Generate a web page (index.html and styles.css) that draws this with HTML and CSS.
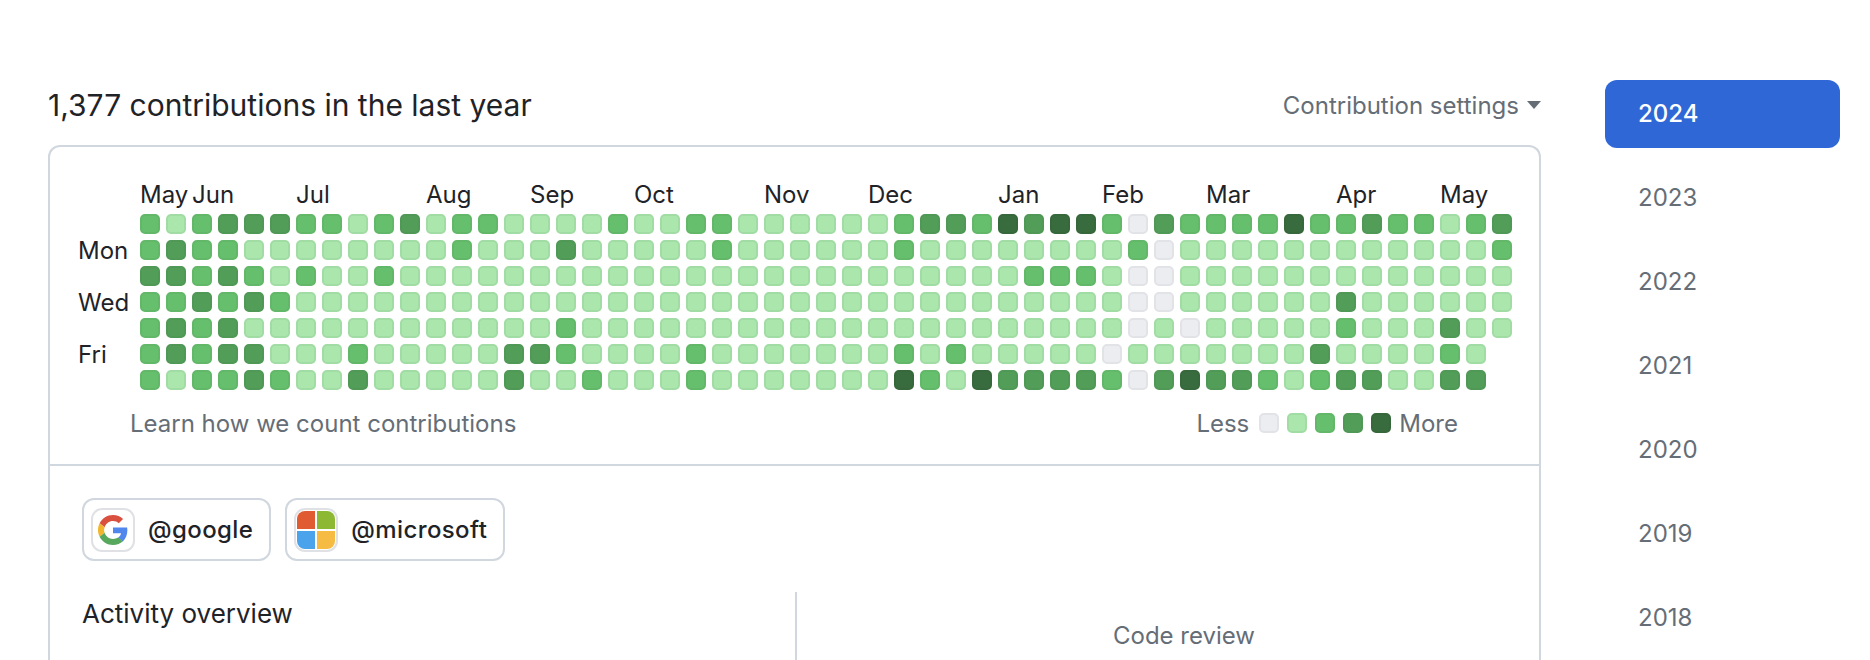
FILE: index.html
```html
<!DOCTYPE html>
<html lang="en">
<head>
    <meta charset="UTF-8">
    <title>Contributions</title>
    <link rel="stylesheet" href="styles.css">
</head>
<body>

<div class="page">
    <div class="main">
        <div class="head">
            <h2 class="total">1,377 contributions in the last year</h2>
            <div class="settings">Contribution settings<span class="caret"></span></div>
        </div>

        <div class="card">
            <div class="calendar">
                <div class="months">
                    <span class="w2">May</span>
                    <span class="w4">Jun</span>
                    <span class="w5">Jul</span>
                    <span class="w4">Aug</span>
                    <span class="w4">Sep</span>
                    <span class="w5">Oct</span>
                    <span class="w4">Nov</span>
                    <span class="w5">Dec</span>
                    <span class="w4">Jan</span>
                    <span class="w4">Feb</span>
                    <span class="w5">Mar</span>
                    <span class="w4">Apr</span>
                    <span class="w2">May</span>
                </div>
                <div class="weeks">
                    <div class="days">
                        <span></span>
                        <span>Mon</span>
                        <span></span>
                        <span>Wed</span>
                        <span></span>
                        <span>Fri</span>
                        <span></span>
                    </div>
                    <div id="grid" class="grid"></div>
                </div>
                <div class="foot">
                    <span>Learn how we count contributions</span>
                    <div class="legend">
                        <span class="less">Less</span>
                        <i class="cell l0"></i>
                        <i class="cell l1"></i>
                        <i class="cell l2"></i>
                        <i class="cell l3"></i>
                        <i class="cell l4"></i>
                        <span class="more">More</span>
                    </div>
                </div>
            </div>

            <div class="orgs">
                <div class="org">
                    <span class="avatar">
                        <svg class="logo-g" viewBox="0 0 48 48">
                            <path fill="#d9503f" d="M24 9.5c3.54 0 6.71 1.22 9.21 3.6l6.85-6.85C35.9 2.38 30.47 0 24 0 14.62 0 6.51 5.38 2.56 13.22l7.98 6.19C12.43 13.72 17.74 9.5 24 9.5z"/>
                            <path fill="#5186ec" d="M46.98 24.55c0-1.57-.15-3.09-.38-4.55H24v9.02h12.94c-.58 2.96-2.26 5.48-4.78 7.18l7.73 6c4.51-4.18 7.09-10.36 7.09-17.65z"/>
                            <path fill="#f1b52e" d="M10.53 28.59c-.48-1.45-.76-2.99-.76-4.59s.27-3.14.76-4.59l-7.98-6.19C.92 16.46 0 20.12 0 24c0 3.88.92 7.54 2.56 10.78l7.97-6.19z"/>
                            <path fill="#57a75c" d="M24 48c6.48 0 11.93-2.13 15.89-5.81l-7.73-6c-2.15 1.45-4.92 2.3-8.16 2.3-6.26 0-11.57-4.22-13.47-9.91l-7.98 6.19C6.51 42.62 14.62 48 24 48z"/>
                        </svg>
                    </span>
                    @google
                </div>
                <div class="org">
                    <span class="avatar">
                        <svg class="logo-ms" viewBox="0 0 38 38">
                            <rect width="18" height="18" fill="#e15b32"/>
                            <rect x="20" width="18" height="18" fill="#8db833"/>
                            <rect y="20" width="18" height="18" fill="#4ba3eb"/>
                            <rect x="20" y="20" width="18" height="18" fill="#f6bb42"/>
                        </svg>
                    </span>
                    @microsoft
                </div>
            </div>

            <div class="overview">
                <div class="activity">Activity overview</div>
                <div class="review">Code review</div>
            </div>
        </div>
    </div>

    <ul class="years">
        <li class="current">2024</li>
        <li>2023</li>
        <li>2022</li>
        <li>2021</li>
        <li>2020</li>
        <li>2019</li>
        <li>2018</li>
    </ul>
</div>

<script src="script.js"></script>
</body>
</html>
```

FILE: styles.css
```css
html, body {
    margin: 0;
    height: 660px;
    overflow: hidden;
    background: #fff;
}
body {
    font-family: Inter, "Liberation Sans", sans-serif;
    font-size: 24px;
    color: #1f2328;
}
.page {
    display: flex;
    align-items: flex-start;
    gap: 64px;
    padding: 80px 30px 0 48px;
}
.main {
    width: 1493px;
    flex: none;
}

.head {
    display: flex;
    justify-content: space-between;
    align-items: center;
    height: 50px;
    margin-bottom: 15px;
}
.total {
    margin: 0;
    font-size: 30px;
    font-weight: 400;
}
.settings {
    display: flex;
    align-items: center;
    color: #656d76;
}
.caret {
    margin-left: 8px;
    border-top: 8px solid #656d76;
    border-left: 7.5px solid transparent;
    border-right: 7.5px solid transparent;
}

.card {
    border: 2px solid #d0d7de;
    border-bottom: 0;
    border-radius: 12px 12px 0 0;
    height: 600px;
}
.calendar {
    padding: 30px 0 21px 28px;
    border-bottom: 2px solid #d0d7de;
}
.months {
    display: flex;
    height: 37px;
    padding-left: 62px;
}
.months span {
    line-height: 36px;
}
.w2 { width: 52px; }
.w4 { width: 104px; }
.w5 { width: 130px; }

.weeks {
    display: flex;
}
.days {
    width: 62px;
    flex: none;
}
.days span {
    display: block;
    height: 26px;
    line-height: 22px;
}
.grid {
    display: flex;
    flex-direction: column;
    gap: 6px;
}
.row {
    display: flex;
    gap: 6px;
}
.cell {
    display: block;
    width: 20px;
    height: 20px;
    box-sizing: border-box;
    border-radius: 5px;
    border: 2px solid;
}
.l0 { background: #ebedf0; border-color: #e2e3e7; }
.l1 { background: #abe7ad; border-color: #a1dca4; }
.l2 { background: #66bf6c; border-color: #62b868; }
.l3 { background: #529e58; border-color: #4f9855; }
.l4 { background: #386c3e; border-color: #36683c; }

.foot {
    display: flex;
    justify-content: space-between;
    align-items: center;
    height: 40px;
    margin-top: 7px;
    padding: 0 81px 0 52px;
    color: #656d76;
}
.legend {
    display: flex;
    align-items: center;
    gap: 8px;
}
.less { margin-right: 2px; }

.orgs {
    display: flex;
    gap: 14px;
    padding: 32px 0 31px 32px;
}
.org {
    display: flex;
    align-items: center;
    height: 63px;
    box-sizing: border-box;
    padding: 0 16px 0 7px;
    gap: 13px;
    border: 2px solid #d0d7de;
    border-radius: 12px;
    font-weight: 500;
    letter-spacing: 0.4px;
}
.avatar {
    display: flex;
    align-items: center;
    justify-content: center;
    width: 44px;
    height: 44px;
    box-sizing: border-box;
    border: 2px solid #dfe1e5;
    border-radius: 11px;
    overflow: hidden;
}
.logo-g {
    width: 30px;
    height: 30px;
}
.logo-ms {
    width: 38px;
    height: 38px;
    border-radius: 8px;
}

.overview {
    display: flex;
    height: 200px;
}
.activity {
    width: 713px;
    padding-left: 32px;
    font-size: 26px;
    line-height: 44px;
    border-right: 2px solid #d0d7de;
}
.review {
    flex: 1;
    padding: 26px 0 0 32px;
    text-align: center;
    color: #656d76;
    line-height: 36px;
}

.years {
    flex: none;
    width: 235px;
    margin: 0;
    padding: 0;
    list-style: none;
}
.years li {
    height: 68px;
    margin-bottom: 16px;
    padding-left: 33px;
    line-height: 68px;
    border-radius: 12px;
    color: #656d76;
}
.years li.current {
    background: #2f67d6;
    color: #fff;
    font-weight: 500;
}
```

FILE: script.js
```js
// one string per weekday, one digit per week (contribution level)
var rows = [
    "2123332212312211112112" + "1" + "11111" + "2332434" + "4203" + "222224223221" + "23",
    "2322111111112111311112" + "1",
    "",
    "",
    "",
    "",
    ""
];

rows = [
    "2123332212312211112112" + "2111111233243442032222422322123",
    "2322111111112111311111" + "2111111211111111201111111111112",
    "3323212112111111111111" + "1111111111112221001111111111111",
    "2232321111111111111111" + "1111111111111111001111113111111",
    "2323111111111111211111" + "1111111111111111010111112111311".slice(0, 31),
    "2323311121111133211112" + "111111121211111011111113111121",
    "2122321131111131121112" + "111111142143333203433212331133"
];

var grid = document.getElementById("grid");
for (var i = 0; i < rows.length; i++) {
    var row = document.createElement("div");
    row.className = "row";
    for (var j = 0; j < rows[i].length; j++) {
        var cell = document.createElement("i");
        cell.className = "cell l" + rows[i].charAt(j);
        row.appendChild(cell);
    }
    grid.appendChild(row);
}
```
